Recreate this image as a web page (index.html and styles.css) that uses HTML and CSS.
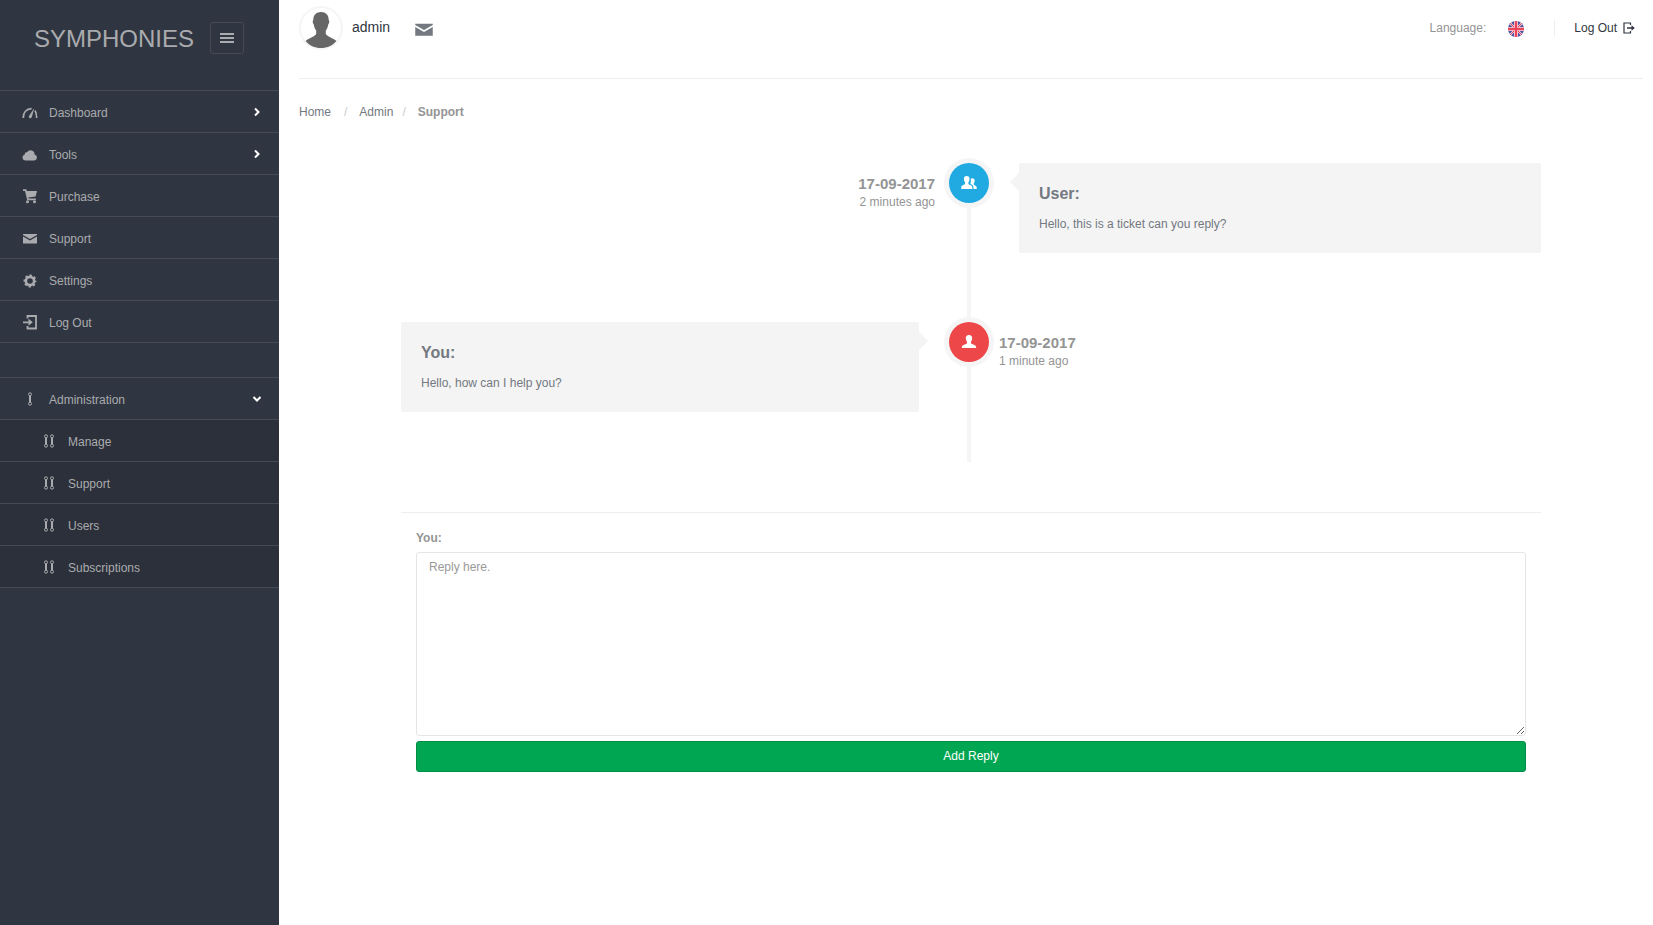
FILE: index.html
```html
<!DOCTYPE html>
<html lang="en">
<head>
  <meta charset="UTF-8">
  <meta name="viewport" content="width=device-width, initial-scale=1.0">
  <title>Symphonies | Support</title>
  <link rel="stylesheet" href="styles.css">
</head>
<body>
  <!-- shared icons -->
  <svg class="sprite" aria-hidden="true">
    <symbol id="mail" viewBox="0 0 16 16">
      <path d="M1 3h14v1L8 8 1 4zM1 5.500l7 4 7-4V12.500H1z"/>
    </symbol>
    <symbol id="chevron" viewBox="0 0 10 10">
      <path d="M3 1.500l3.500 3.500L3 8.500" fill="none" stroke="currentColor" stroke-width="2"/>
    </symbol>
    <symbol id="flow" viewBox="0 0 6 14">
      <g fill="none" stroke="currentColor">
        <circle cx="3" cy="2.300" r="1.500"/>
        <circle cx="3" cy="11.700" r="1.500"/>
        <path d="M3 3.800v6.400" stroke-width="2"/>
      </g>
    </symbol>
    <symbol id="flow-parallel" viewBox="0 0 12 14">
      <g fill="none" stroke="currentColor">
        <circle cx="3" cy="2.300" r="1.500"/>
        <circle cx="3" cy="11.700" r="1.500"/>
        <circle cx="9" cy="2.300" r="1.500"/>
        <circle cx="9" cy="11.700" r="1.500"/>
        <path d="M3 3.800v6.400M9 3.800v6.400" stroke-width="2"/>
      </g>
    </symbol>
    <symbol id="person" viewBox="0 0 16 14">
      <path d="M8 0c2.300 0 3.300 1.300 3.200 3.400-.1 1.700-.6 2.400-1.200 3.200v1.500c0 .8 1.400 1.100 2.900 1.700 1.600.6 2.300 1.200 2.300 3.200H.8c0-2 .7-2.600 2.300-3.200C4.600 9.200 6 8.900 6 8.100V6.600c-.6-.8-1.100-1.500-1.200-3.200C4.700 1.300 5.700 0 8 0z"/>
    </symbol>
  </svg>

  <div class="page">
    <aside class="sidebar">
      <div class="logo">
        <a href="#" class="logo-text">SYMPHONIES</a>
        <button type="button" class="collapse-btn" aria-label="Toggle menu">
          <svg width="14" height="10" viewBox="0 0 14 10"><path d="M0 0h14v2H0zM0 4h14v2H0zM0 8h14v2H0z"/></svg>
        </button>
      </div>

      <nav>
        <ul class="menu">
          <li>
            <a href="#">
              <svg class="icon" viewBox="0 0 16 16"><g fill="none" stroke="currentColor"><path d="M1.200 13C1.200 7.500 4.500 3.800 9.600 3.600" stroke-width="1.800"/><path d="M13 5.500c1.200 2 1.700 4.500 1.700 7.500" stroke-width="1.600"/></g><path d="M12.300 3L9.900 11.800c-.4 1.400-1.500 1.600-2.300 1.200-.9-.5-1-1.500-.3-2.600z"/></svg>
              <span>Dashboard</span>
              <svg class="arrow"><use href="#chevron"/></svg>
            </a>
          </li>
          <li>
            <a href="#">
              <svg class="icon" viewBox="0 0 16 16"><path d="M12.500 13.500H3.300a3 3 0 0 1-.6-5.900 2.200 2.200 0 0 1 2.400-2.300 4 4 0 0 1 7.400 2.300 3 3 0 0 1 0 5.900z"/></svg>
              <span>Tools</span>
              <svg class="arrow"><use href="#chevron"/></svg>
            </a>
          </li>
          <li>
            <a href="#">
              <svg class="icon" viewBox="0 1 16 16"><path d="M1 1.300h3.300l.5 1.600H15l-1.400 5.500-7.300 1.200.3 1h7.200v1.700H5.300L3 3H1z"/><circle cx="5.500" cy="13.800" r="1.500"/><circle cx="12.500" cy="13.800" r="1.500"/></svg>
              <span>Purchase</span>
            </a>
          </li>
          <li>
            <a href="#">
              <svg class="icon"><use href="#mail"/></svg>
              <span>Support</span>
            </a>
          </li>
          <li>
            <a href="#">
              <svg class="icon" viewBox="0 0 16 16"><circle cx="8" cy="8" r="4.100" fill="none" stroke="currentColor" stroke-width="2.600"/><circle cx="8" cy="8" r="5.600" fill="none" stroke="currentColor" stroke-width="1.800" stroke-dasharray="2.400 2" stroke-dashoffset="1.200"/></svg>
              <span>Settings</span>
            </a>
          </li>
          <li>
            <a href="#">
              <svg class="icon" viewBox="0 1 16 16"><path d="M5.500 4.500V2H14v12.500H5.500V12" fill="none" stroke="currentColor" stroke-width="1.800"/><path d="M1 7.400h5.500V4.800L10.800 8.300l-4.300 3.500V9.200H1z"/></svg>
              <span>Log Out</span>
            </a>
          </li>
        </ul>

        <ul class="menu">
          <li>
            <a href="#">
              <svg class="icon icon-flow"><use href="#flow"/></svg>
              <span>Administration</span>
              <svg class="arrow arrow-down"><use href="#chevron"/></svg>
            </a>
            <ul class="submenu">
              <li><a href="#"><svg class="icon icon-flow"><use href="#flow-parallel"/></svg><span>Manage</span></a></li>
              <li><a href="#"><svg class="icon icon-flow"><use href="#flow-parallel"/></svg><span>Support</span></a></li>
              <li><a href="#"><svg class="icon icon-flow"><use href="#flow-parallel"/></svg><span>Users</span></a></li>
              <li><a href="#"><svg class="icon icon-flow"><use href="#flow-parallel"/></svg><span>Subscriptions</span></a></li>
            </ul>
          </li>
        </ul>
      </nav>
    </aside>

    <main class="content">
      <header class="topbar">
        <a href="#" class="user">
          <svg class="avatar" viewBox="0 0 44 44">
            <circle cx="22" cy="22" r="21" fill="#fff" stroke="#f5f5f5" stroke-width="2"/>
            <path fill="#666" d="M22 6c4.800 0 7.800 3 7.700 8 .8.300.8 3.300-.5 4.500-.3 3-1.400 4.700-2.400 5.900v3.300c.6 2.700 7.700 4.300 10.600 7.300C33.700 39.600 28.500 42 22 42S10.300 39.600 6.600 35c2.900-3 10-4.600 10.600-7.300v-3.300c-1-1.200-2.100-2.900-2.400-5.900-1.300-1.200-1.300-4.200-.5-4.500C14.200 9 17.200 6 22 6z"/>
          </svg>
          <span>admin</span>
        </a>
        <a href="#" class="messages" aria-label="Messages"><svg><use href="#mail"/></svg></a>

        <div class="links">
          <span>Language:</span>
          <button type="button" class="flag" aria-label="English">
            <svg width="16" height="16" viewBox="0 0 16 16">
              <clipPath id="round"><circle cx="8" cy="8" r="8"/></clipPath>
              <g clip-path="url(#round)">
                <path fill="#4a55a5" d="M0 0h16v16H0z"/>
                <path stroke="#f3d5dc" stroke-width="2" d="M0 0l16 16M16 0L0 16"/>
                <path stroke="#e8435a" d="M0 0l16 16M16 0L0 16"/>
                <path stroke="#f6dfe4" stroke-width="4" d="M8 0v16M0 8h16"/>
                <path stroke="#e8435a" stroke-width="2.400" d="M8 0v16M0 8h16"/>
              </g>
            </svg>
          </button>
          <a href="#" class="logout">
            Log Out
            <svg width="12" height="12" viewBox="0 0 12 12"><path d="M7.500 3V1H1v10h6.500V9" fill="none" stroke="currentColor" stroke-width="1.200"/><path d="M4 5.300h4.500V3.200L11.800 6 8.500 8.800V6.700H4z"/></svg>
          </a>
        </div>
      </header>

      <ol class="breadcrumb">
        <li><a href="#">Home</a></li>
        <li><a href="#">Admin</a></li>
        <li><strong>Support</strong></li>
      </ol>

      <div class="ticket">
        <div class="timeline">
          <article class="entry">
            <div class="time"><strong>17-09-2017</strong><span>2 minutes ago</span></div>
            <div class="marker marker-user">
              <svg width="16" height="14" viewBox="0 0 16 14"><path d="M5.700 0c2 0 2.900 1.200 2.800 3.200-.1 1.600-.6 2.400-1.100 3.100v1.400c0 .9 3.700 1.500 3.900 3.200V13H.3v-2.100C.5 9.200 4 8.600 4 7.700V6.300c-.5-.7-1-1.500-1.100-3.100C2.800 1.200 3.700 0 5.700 0z"/><path d="M11.400 2.200c1.700 0 2.400 1 2.300 2.600-.1 1.200-.5 1.900-.9 2.500v1.200c0 .8 2.700 1.300 2.900 2.600V13h-3.300v-2.300c-.3-1.400-1.600-2-2.900-2.600.3-.4.100-.6-.1-1 .8-1.400.6-2.500.2-3.500.3-.9.800-1.400 1.800-1.400z"/></svg>
            </div>
            <div class="card">
              <h2>User:</h2>
              <p>Hello, this is a ticket can you reply?</p>
            </div>
          </article>

          <article class="entry entry-left">
            <div class="card">
              <h2>You:</h2>
              <p>Hello, how can I help you?</p>
            </div>
            <div class="marker marker-admin">
              <svg width="16" height="14"><use href="#person"/></svg>
            </div>
            <div class="time"><strong>17-09-2017</strong><span>1 minute ago</span></div>
          </article>
        </div>

        <form class="reply">
          <label for="reply">You:</label>
          <textarea id="reply" placeholder="Reply here."></textarea>
          <button type="submit">Add Reply</button>
        </form>
      </div>
    </main>
  </div>
</body>
</html>
```
FILE: styles.css
```css
* {
  box-sizing: border-box;
}

body {
  margin: 0;
  background: #fff;
  color: #949494;
  font-family: "Liberation Sans", Arial, sans-serif;
  font-size: 12px;
  line-height: 17px;
}

a {
  color: inherit;
  text-decoration: none;
}

ul,
ol {
  margin: 0;
  padding: 0;
  list-style: none;
}

button {
  font: inherit;
  cursor: pointer;
}

svg {
  display: block;
  fill: currentColor;
}

.sprite {
  position: absolute;
  width: 0;
  height: 0;
}

.page {
  display: flex;
  min-height: 100vh;
}

/* Sidebar */
.sidebar {
  flex: 0 0 279px;
  background: #303641;
  color: #aaabae;
}

.logo {
  display: flex;
  justify-content: space-between;
  align-items: center;
  padding: 21px 35px 35px 34px;
}

.logo-text {
  padding-top: 2px;
  font-size: 24px;
  line-height: 32px;
}

.collapse-btn {
  display: flex;
  justify-content: center;
  align-items: center;
  width: 34px;
  height: 32px;
  padding: 0;
  background: none;
  border: 1px solid #454a54;
  border-radius: 3px;
  color: #aaabae;
}

.menu {
  margin-bottom: 34px;
  border-top: 1px solid #454a54;
}

.menu a {
  display: flex;
  align-items: center;
  height: 42px;
  padding: 4px 17px 0 22px;
  border-bottom: 1px solid #454a54;
}

.menu a:hover {
  color: #fff;
}

.icon {
  width: 16px;
  height: 16px;
  margin: 0 11px 2px 0;
}

.icon-flow {
  height: 14px;
  margin-bottom: 4px;
}

.arrow {
  width: 10px;
  height: 10px;
  margin: 0 0 4px auto;
  color: #fff;
}

.arrow-down {
  transform: rotate(90deg);
}

.submenu {
  background: #2b303a;
}

.submenu a {
  padding-left: 41px;
}

/* Top bar */
.content {
  flex: 1;
  min-width: 0;
  padding: 0 10px 20px 20px;
}

.topbar {
  display: flex;
  align-items: flex-start;
  height: 79px;
  padding-top: 6px;
  border-bottom: 1px solid #eee;
}

.user {
  display: flex;
  gap: 9px;
  color: #303641;
  font-size: 14px;
  line-height: 42px;
}

.avatar {
  width: 44px;
  height: 44px;
}

.messages {
  margin: 14px 0 0 24px;
  color: #737881;
}

.messages svg {
  width: 20px;
  height: 20px;
}

.links {
  display: flex;
  align-items: center;
  margin: 13px 8px 0 auto;
}

.flag {
  margin: 2px 30px 0 22px;
  padding: 0;
  background: none;
  border: none;
}

.logout {
  display: flex;
  align-items: center;
  gap: 6px;
  padding-left: 19px;
  color: #303641;
  border-left: 1px solid #eee;
}

.breadcrumb {
  display: flex;
  padding: 25px 0 42px;
}

.breadcrumb a {
  color: #737881;
}

.breadcrumb li + li::before {
  content: "/";
  padding: 0 12px 0 13px;
  color: #ccc;
}

.breadcrumb li:last-child::before {
  padding-left: 9px;
}

/* Ticket */
.ticket {
  max-width: 1140px;
  margin: 0 auto;
}

.timeline {
  margin-bottom: 50px;
  background: linear-gradient(#f5f5f6, #f5f5f6) calc(50% - 2px) 0 / 4px 100% no-repeat;
}

.entry {
  display: grid;
  grid-template-columns: calc(50% - 22px) 40px 1fr;
  align-items: start;
  padding-bottom: 69px;
}

.entry:last-child {
  padding-bottom: 50px;
}

.marker {
  display: flex;
  justify-content: center;
  align-items: center;
  height: 40px;
  border-radius: 50%;
  box-shadow: 0 0 0 5px #f5f5f6;
  color: #fff;
}

.marker-user {
  background: #21a9e1;
}

.marker-admin {
  background: #ee4749;
}

.time {
  padding: 12px 14px 0 10px;
  text-align: right;
}

.entry-left .time {
  text-align: left;
}

.time strong,
.time span {
  display: block;
}

.time strong {
  margin-bottom: 1px;
  font-size: 15px;
  line-height: 18px;
}

.card {
  position: relative;
  margin-left: 30px;
  padding: 21px 20px 20px;
  background: #f4f4f4;
  border-radius: 2px;
  color: #737881;
}

.entry-left .card {
  margin: 0 30px 0 0;
}

/* pointer towards the line */
.card::before {
  content: "";
  position: absolute;
  top: 10px;
  right: 100%;
  border: 9px solid transparent;
  border-left-width: 0;
  border-right-color: #f4f4f4;
}

.entry-left .card::before {
  right: auto;
  left: 100%;
  border-width: 9px 0 9px 9px;
  border-left-color: #f4f4f4;
}

.card h2 {
  margin: 0 0 12px;
  font-size: 16px;
  line-height: 20px;
}

.card p {
  margin: 0;
}

/* Reply form */
.reply {
  display: flex;
  flex-direction: column;
  padding: 17px 15px 0;
  border-top: 1px solid #eee;
}

.reply label {
  margin-bottom: 5px;
  font-weight: bold;
}

.reply textarea {
  height: 184px;
  margin-bottom: 5px;
  padding: 6px 12px;
  border: 1px solid #e4e5e7;
  border-radius: 3px;
  color: #555;
  font: inherit;
  resize: vertical;
}

.reply textarea::placeholder {
  color: #999;
}

.reply button {
  height: 31px;
  padding: 0;
  background: #00a651;
  border: 1px solid #008d45;
  border-radius: 3px;
  color: #fff;
}
```
